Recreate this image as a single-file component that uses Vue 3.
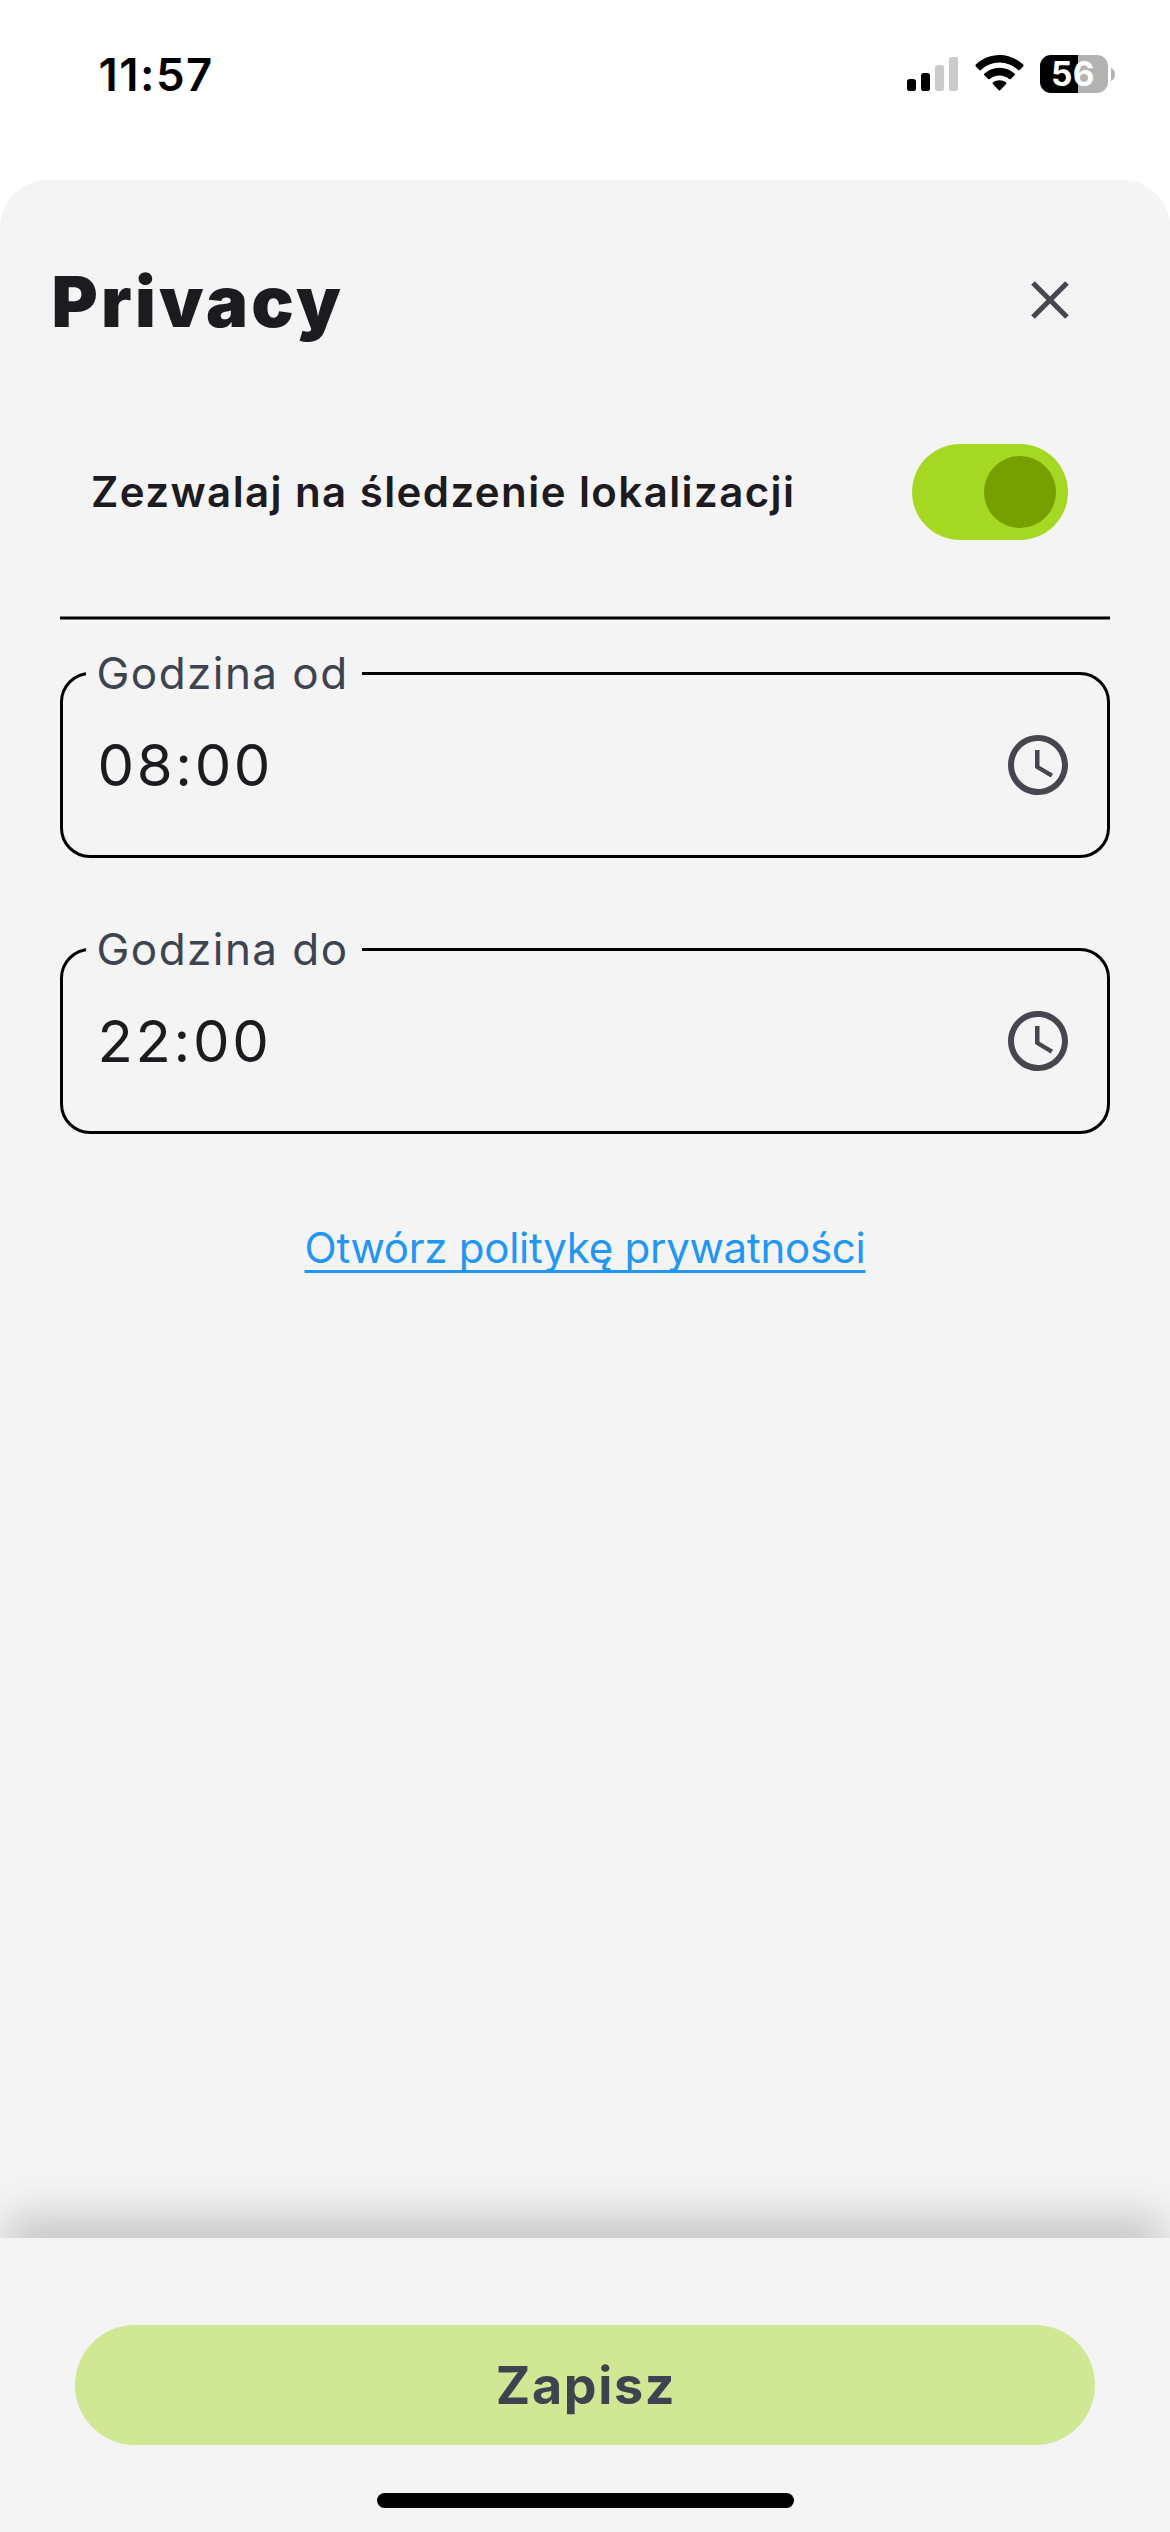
<script setup>
import { ref } from 'vue'

const allowed = ref(true)
const fields = [
  { label: 'Godzina od', value: '08:00' },
  { label: 'Godzina do', value: '22:00' },
]
</script>

<template>
  <div class="screen">
    <header class="status">
      <span class="time">11:57</span>
      <div class="indicators">
        <svg class="signal" viewBox="0 0 51 34">
          <rect x="0" y="22" width="9" height="12" rx="2.8" />
          <rect x="14" y="16" width="9" height="18" rx="2.8" />
          <rect class="off" x="28" y="8" width="9" height="26" rx="2.8" />
          <rect class="off" x="42" y="0" width="9" height="34" rx="2.8" />
        </svg>
        <svg class="wifi" viewBox="0 0 49 36">
          <path d="M24.5 0C33.5 0 42 3.6 48.2 9.6Q49 10.5 48.2 11.4L44.6 15Q43.8 15.8 43 15C38 10.4 31.5 7.6 24.5 7.6S11 10.4 6 15Q5.2 15.8 4.4 15L.8 11.4Q0 10.5 .8 9.6C7 3.6 15.5 0 24.5 0Z" />
          <path d="M24.5 12.7C30.3 12.7 35.6 14.9 39.6 18.6Q40.4 19.4 39.6 20.2L35.8 24Q35 24.7 34.2 24C31.6 21.7 28.2 20.4 24.5 20.4S17.4 21.7 14.8 24Q14 24.7 13.2 24L9.4 20.2Q8.6 19.4 9.4 18.6C13.4 14.9 18.7 12.7 24.5 12.7Z" />
          <path d="M24.5 25.2C27.2 25.2 29.2 26 31.1 27.5Q31.9 28.3 31.1 29.1L25.2 35.2Q24.5 35.9 23.8 35.2L17.9 29.1Q17.1 28.3 17.9 27.5C19.8 26 21.8 25.2 24.5 25.2Z" />
        </svg>
        <div class="battery">
          <div class="cell"><span>56</span></div>
          <svg class="tip" viewBox="0 0 4 13"><path d="M0 0C2.5 1 4 3.5 4 6.5S2.5 12 0 13Z" /></svg>
        </div>
      </div>
    </header>

    <main class="sheet">
      <div class="title-row">
        <h1>Privacy</h1>
        <svg class="close" viewBox="0 0 38 38"><path d="M2 2L36 36M36 2L2 36" /></svg>
      </div>

      <div class="toggle-row">
        <span class="toggle-label">Zezwalaj na śledzenie lokalizacji</span>
        <div class="switch" :class="{ on: allowed }" @click="allowed = !allowed"><i></i></div>
      </div>

      <div class="divider"></div>

      <div v-for="f in fields" :key="f.label" class="field">
        <span class="field-label">{{ f.label }}</span>
        <span class="field-value">{{ f.value }}</span>
        <svg class="clock" viewBox="0 0 24 24">
          <path d="M11.99 2C6.47 2 2 6.48 2 12s4.47 10 9.99 10C17.52 22 22 17.52 22 12S17.52 2 11.99 2zM12 20c-4.42 0-8-3.58-8-8s3.58-8 8-8 8 3.58 8 8-3.58 8-8 8zm.5-13H11v6l5.25 3.15.75-1.23-4.5-2.67z" />
        </svg>
      </div>

      <a class="policy">Otwórz politykę prywatności</a>
    </main>

    <footer class="footer">
      <button class="save">Zapisz</button>
      <div class="home"></div>
    </footer>
  </div>
</template>

<style>
body {
  margin: 0;
}
</style>

<style scoped>
.screen {
  display: flex;
  flex-direction: column;
  width: 1170px;
  height: 2532px;
  overflow: hidden;
  background: #fff;
  color: #1d1b20;
  font-family: Inter, sans-serif;
}
.status {
  display: flex;
  justify-content: space-between;
  align-items: flex-start;
  height: 180px;
  padding: 0 55px 0 98.5px;
  box-sizing: border-box;
  color: #000;
}
.time {
  padding-top: 47px;
  font-size: 45.5px;
  line-height: 55px;
  font-weight: 600;
  letter-spacing: 1.5px;
}
.indicators {
  display: flex;
  align-items: flex-start;
  padding-top: 55px;
}
.signal {
  width: 51px;
  height: 34px;
  margin: 2px 17px 0 0;
}
.off {
  fill: #cbcbcb;
}
.wifi {
  width: 49px;
  height: 36px;
  margin-right: 16px;
}
.battery {
  display: flex;
  align-items: center;
  gap: 3px;
}
.cell {
  box-sizing: border-box;
  width: 68px;
  height: 38px;
  padding-right: 2px;
  border-radius: 11px;
  background: linear-gradient(90deg, #000 38px, #b3b3b3 38px);
  color: #fff;
  font-size: 33.5px;
  line-height: 38px;
  font-weight: 700;
  text-align: center;
  letter-spacing: 0.5px;
}
.tip {
  width: 4px;
  height: 13px;
  fill: #b3b3b3;
}
.sheet {
  display: flex;
  flex-direction: column;
  flex: 1;
  padding: 0 60px;
  border-radius: 48px 48px 0 0;
  background: #f4f4f4;
}
.title-row {
  display: flex;
  justify-content: space-between;
  align-items: center;
  height: 240px;
  margin-left: -8.5px;
  padding-right: 41px;
}
h1 {
  margin: 3px 0 0;
  font-size: 70.5px;
  line-height: 84px;
  font-weight: 900;
  letter-spacing: 3.3px;
}
.close {
  width: 38px;
  height: 38px;
  fill: none;
  stroke: #49454f;
  stroke-width: 5.2px;
}
.toggle-row {
  display: flex;
  justify-content: space-between;
  align-items: center;
  height: 144px;
  padding: 0 42px 0 31px;
}
.toggle-label {
  font-size: 42px;
  line-height: 60px;
  font-weight: 600;
  letter-spacing: 1.42px;
}
.switch {
  display: flex;
  box-sizing: border-box;
  width: 156px;
  height: 96px;
  padding: 12px;
  border-radius: 48px;
  background: #a5d823;
}
.switch.on {
  justify-content: flex-end;
}
.switch i {
  width: 72px;
  height: 72px;
  border-radius: 50%;
  background: #75a000;
}
.divider {
  height: 2px;
  margin: 52px 0;
  background: #000;
  border: solid #797979;
  border-width: 1px 0;
}
.field {
  position: relative;
  display: flex;
  justify-content: space-between;
  align-items: center;
  box-sizing: border-box;
  height: 186px;
  margin-bottom: 90px;
  padding: 0 33px 0 34.5px;
  border: 3px solid #000;
  border-radius: 30px;
}
.field-label {
  position: absolute;
  left: 23px;
  top: -31px;
  box-sizing: border-box;
  width: 276px;
  padding-left: 10.5px;
  background: #f4f4f4;
  color: #3e4350;
  font-size: 44px;
  line-height: 58px;
  letter-spacing: 1.46px;
}
.field-value {
  font-size: 58px;
  line-height: 70px;
  letter-spacing: 2.65px;
}
.clock {
  width: 72px;
  height: 72px;
  fill: #49454f;
}
.policy {
  align-self: center;
  margin-top: -6px;
  color: #2196f3;
  font-size: 42px;
  line-height: 60px;
  letter-spacing: -0.26px;
  text-decoration: underline;
  text-decoration-thickness: 2.7px;
  text-decoration-skip-ink: none;
  text-underline-offset: 6.5px;
}
.footer {
  display: flex;
  flex-direction: column;
  align-items: center;
  height: 294px;
  background: #f4f4f4;
  box-shadow: 0 -31px 36px -7px rgba(0, 0, 0, 0.17);
}
.save {
  box-sizing: border-box;
  width: 1020px;
  height: 120px;
  margin: 87px 0 48px;
  padding: 2px 0 0 2px;
  border: 0;
  border-radius: 60px;
  background: #d0e794;
  color: #3e4350;
  font: 700 52px/118px Inter, sans-serif;
  letter-spacing: 1.66px;
}
.home {
  width: 417px;
  height: 15px;
  border-radius: 8px;
  background: #000;
}
</style>
